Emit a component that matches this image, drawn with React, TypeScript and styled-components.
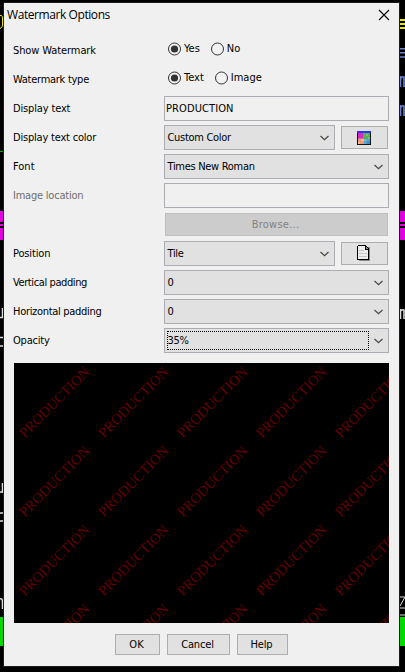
import React, { useState } from "react";
import styled, { createGlobalStyle } from "styled-components";

const GlobalStyle = createGlobalStyle`
  html, body { margin: 0; padding: 0; background: #000; overflow: hidden; }
  * { box-sizing: border-box; }
`;

const Screen = styled.main`
  position: relative;
  width: 405px;
  height: 672px;
  padding: 3px 0 0 4px;
  overflow: hidden;
  background: #000;
  color: #000;
  font-family: "DejaVu Sans Condensed", "DejaVu Sans", sans-serif;
  font-stretch: condensed;
  font-size: 11px;
  line-height: 14px;
`;

const TerminalArt = styled.svg`
  position: absolute;
  inset: 0;
`;

const Dialog = styled.section`
  position: relative;
  width: 395px;
  height: 663px;
  padding: 0 10px;
  background: #f0f0f0;
  box-shadow: 0 0 0 1px #1c1c1a;
  display: flex;
  flex-direction: column;
`;

const TitleBar = styled.header`
  height: 31px;
  margin: 0 -10px;
  padding: 0 9px 7px 3px;
  display: flex;
  align-items: center;
  justify-content: space-between;
  font-family: "Open Sans", "Noto Sans", sans-serif;
  font-stretch: normal;
  font-size: 12px;
`;

const Title = styled.span`
  letter-spacing: -0.42px;
`;

const CloseIcon = styled.svg`
  width: 12px;
  height: 12px;
  display: block;
`;

const Form = styled.div`
  display: grid;
  grid-auto-rows: 25px;
  row-gap: 4px;
  margin-top: 4px;
`;

const Row = styled.div`
  display: grid;
  grid-template-columns: 150px 225px;
  align-items: center;
`;

const Label = styled.label<{ $disabled?: boolean; $spacing?: number }>`
  margin-left: -1px;
  color: ${(p) => (p.$disabled ? "#6f6f6f" : "#000")};
  letter-spacing: ${(p) => p.$spacing ?? -0.22}px;
  white-space: nowrap;
`;

const FieldGroup = styled.div`
  display: flex;
  align-items: center;
  justify-content: space-between;
  padding-right: 1px;
`;

const RadioGroup = styled.div`
  display: flex;
  align-items: center;
  gap: 11px;
  padding: 0 0 3px 4px;
`;

const Radio = styled.div`
  display: flex;
  align-items: center;
  gap: 2px;
`;

const RadioMark = styled.svg`
  width: 14px;
  height: 14px;
  display: block;
`;

const TextBox = styled.div`
  height: 25px;
  padding: 5px 1px;
  border: 1px solid #abadb3;
  background: #f0f0f0;
  letter-spacing: 0.1px;
`;

const Select = styled.div<{ $width?: number }>`
  width: ${(p) => p.$width ?? 225}px;
  height: 25px;
  padding: 2px 5px 2px 2px;
  border: 1px solid #abadb3;
  background: #e1e1e1;
  display: flex;
  align-items: center;
  justify-content: space-between;
`;

const SelectValue = styled.span<{ $focused?: boolean }>`
  width: 202px;
  height: 19px;
  padding: 2px 0 0;
  border: 1px dotted ${(p) => (p.$focused ? "#000" : "transparent")};
  text-indent: -0.5px;
  letter-spacing: -0.3px;
  white-space: nowrap;
`;

const Chevron = styled.svg`
  width: 9px;
  height: 6px;
  display: block;
  flex: none;
`;

const Button = styled.button<{ $width: number; $height?: number; $disabled?: boolean; $spacing?: number }>`
  width: ${(p) => p.$width}px;
  height: ${(p) => p.$height ?? 23}px;
  padding: 0 2px 0 0;
  border: 1px solid ${(p) => (p.$disabled ? "#bfbfbf" : "#adadad")};
  border-radius: 0;
  background: ${(p) => (p.$disabled ? "#cccccc" : "#e1e1e1")};
  color: ${(p) => (p.$disabled ? "#838383" : "#000")};
  font: inherit;
  letter-spacing: ${(p) => p.$spacing ?? 0}px;
  display: flex;
  align-items: center;
  justify-content: center;
`;

const BrowseWrap = styled.div`
  grid-column: 2;
  padding: 0 1px;
`;

const Preview = styled.svg`
  width: 375px;
  height: 260px;
  margin-top: 10px;
  display: block;
  flex: none;
  background: #000;
`;

const Actions = styled.footer`
  display: flex;
  gap: 7px;
  margin: 11px 0 0 101px;
`;

function Terminal() {
  return (
    <TerminalArt width="405" height="672" viewBox="0 0 405 672">
      <path d="M0 15.5H1.5Q2.5 16 2.5 18V25Q2.5 28 0 28.5" fill="none" stroke="#e6e600" />
      <path d="M400 20H405M400 24H405M400 28H405" stroke="#e6e600" strokeWidth="1.8" />
      <path d="M400 48.7H405M400 52.7H405M400 57H405" stroke="#7080d0" strokeWidth="1.6" />
      <path d="M400.500 87V76M400.500 79Q402 76 404 77V87M400.500 116V105M400.500 108Q402 105 404 106V116" fill="none" stroke="#7080d0" strokeWidth="1.6" />
      <path d="M0 151.500H4" stroke="#00a800" />
      <path d="M0 211H4V240H0ZM400 211H405V240H400Z" fill="#e000e0" />
      <path d="M0 223H4M0 227H4M400 223H405M400 227H405" stroke="#000" strokeWidth="2" />
      <path d="M2.500 308V318M0 317.500H3M3 337.500H0M3 346H0M2.500 483V493M0 492H3M0 513H3M0 521H3M0 599Q2.500 598 2.500 602V609M400.500 319V309M400.500 311Q402 309 404 310V319" fill="none" stroke="#ddd" strokeWidth="1.5" />
      <path d="M400 597H405L400 606M400 608H405M400 615H405" fill="none" stroke="#ddd" />
      <path d="M0 617H4V646H0ZM400 617H405V646H400Z" fill="#00d900" />
    </TerminalArt>
  );
}

function RadioOption({ label, checked, onSelect }: { label: string; checked: boolean; onSelect: () => void }) {
  return (
    <Radio role="radio" aria-checked={checked} onClick={onSelect}>
      <RadioMark viewBox="0 0 14 14">
        <circle cx="6.500" cy="7" r="6" fill="#f2f2f2" stroke="#333" />
        {checked && <circle cx="6.500" cy="7" r="3.600" fill="#333" />}
      </RadioMark>
      <span>{label}</span>
    </Radio>
  );
}

function ComboBox({ value, width, focused }: { value: string; width?: number; focused?: boolean }) {
  return (
    <Select $width={width}>
      <SelectValue $focused={focused}>{value}</SelectValue>
      <Chevron viewBox="0 0 9 6">
        <path d="M0.500 1L4.500 4.700L8.500 1" fill="none" stroke="#4b4b4b" strokeWidth="1.300" />
      </Chevron>
    </Select>
  );
}

function PaletteIcon() {
  return (
    <svg width="14" height="14" viewBox="0 0 14 14" shapeRendering="crispEdges">
      <path d="M0 0H14V14H0Z" fill="#111" />
      <path d="M0 0H14V2H0Z" fill="#2832ff" />
      <path d="M1 2H6V7H1Z" fill="#d928c0" />
      <path d="M6 2H7V8H1V7H6Z" fill="#c070a8" />
      <path d="M7 2H13V8H7Z" fill="#58ae58" />
      <path d="M9 3H11V5H9ZM11 6H13V8H11Z" fill="#78c468" />
      <path d="M1 8H7V13H1Z" fill="#f09878" />
      <path d="M4 8H7V10H4ZM1 11H3V13H1Z" fill="#f0bd98" />
      <path d="M7 8H13V13H7Z" fill="#58a6d0" />
      <path d="M7 8H9V10H7Z" fill="#86b8bd" />
      <path d="M10 10H13V13H10Z" fill="#3b8bd5" />
    </svg>
  );
}

function PageIcon() {
  return (
    <svg width="14" height="17" viewBox="0 0 14 17" shapeRendering="crispEdges">
      <path d="M2 2H13V16H2Z" fill="#888" />
      <path d="M1 1H9V4H12V15H1Z" fill="#eee" />
      <path d="M1 0H9V1H1ZM0 1H1V15H0ZM1 14H12V15H1ZM11 5H12V15H11ZM8 1H9V5H8ZM9 4H12V5H9ZM9 1H10V2H9ZM10 2H11V3H10ZM11 3H12V4H11Z" fill="#000" />
      <path d="M2 5.500H7M2 8.500H10M2 11.500H10" stroke="#c4c4c4" />
    </svg>
  );
}

function Watermarks() {
  const tiles = Array.from({ length: 20 }, (_, i) => ({ x: (i % 5) * 79, y: Math.floor(i / 5) * 79 }));
  return (
    <Preview viewBox="0 0 375 260">
      {tiles.map(({ x, y }) => (
        <text
          key={`${x}-${y}`}
          transform={`translate(${x + 10.7} ${y + 75.5}) rotate(-45)`}
          fill="#640000"
          fontFamily="Liberation Serif, serif"
          fontSize="14.400"
          textLength="93"
        >
          PRODUCTION
        </text>
      ))}
    </Preview>
  );
}

export default function App() {
  const [shown, setShown] = useState(true);
  const [kind, setKind] = useState("Text");
  return (
    <Screen>
      <GlobalStyle />
      <Terminal />
      <Dialog role="dialog" aria-label="Watermark Options">
        <TitleBar>
          <Title>Watermark Options</Title>
          <CloseIcon viewBox="0 0 12 12">
            <path d="M1 1L11 11M11 1L1 11" stroke="#000" strokeWidth="1.100" />
          </CloseIcon>
        </TitleBar>
        <Form>
          <Row>
            <Label $spacing={-0.1}>Show Watermark</Label>
            <RadioGroup>
              <RadioOption label="Yes" checked={shown} onSelect={() => setShown(true)} />
              <RadioOption label="No" checked={!shown} onSelect={() => setShown(false)} />
            </RadioGroup>
          </Row>
          <Row>
            <Label $spacing={-0.27}>Watermark type</Label>
            <RadioGroup>
              {["Text", "Image"].map((name) => (
                <RadioOption key={name} label={name} checked={kind === name} onSelect={() => setKind(name)} />
              ))}
            </RadioGroup>
          </Row>
          <Row>
            <Label $spacing={-0.15}>Display text</Label>
            <TextBox>PRODUCTION</TextBox>
          </Row>
          <Row>
            <Label $spacing={-0.2}>Display text color</Label>
            <FieldGroup>
              <ComboBox value="Custom Color" width={171} />
              <Button $width={47} aria-label="Choose color"><PaletteIcon /></Button>
            </FieldGroup>
          </Row>
          <Row>
            <Label $spacing={0}>Font</Label>
            <ComboBox value="Times New Roman" />
          </Row>
          <Row>
            <Label $disabled>Image location</Label>
            <TextBox />
          </Row>
          <Row>
            <BrowseWrap>
              <Button $width={223} $spacing={0.25} $disabled>Browse...</Button>
            </BrowseWrap>
          </Row>
          <Row>
            <Label $spacing={-0.15}>Position</Label>
            <FieldGroup>
              <ComboBox value="Tile" width={171} />
              <Button $width={47} aria-label="Page layout"><PageIcon /></Button>
            </FieldGroup>
          </Row>
          <Row>
            <Label $spacing={-0.4}>Vertical padding</Label>
            <ComboBox value="0" />
          </Row>
          <Row>
            <Label $spacing={-0.3}>Horizontal padding</Label>
            <ComboBox value="0" />
          </Row>
          <Row>
            <Label>Opacity</Label>
            <ComboBox value="35%" focused />
          </Row>
        </Form>
        <Watermarks />
        <Actions>
          <Button $width={45} $height={21}>OK</Button>
          <Button $width={63} $height={21} $spacing={-0.15}>Cancel</Button>
          <Button $width={51} $height={21} $spacing={-0.15}>Help</Button>
        </Actions>
      </Dialog>
    </Screen>
  );
}
